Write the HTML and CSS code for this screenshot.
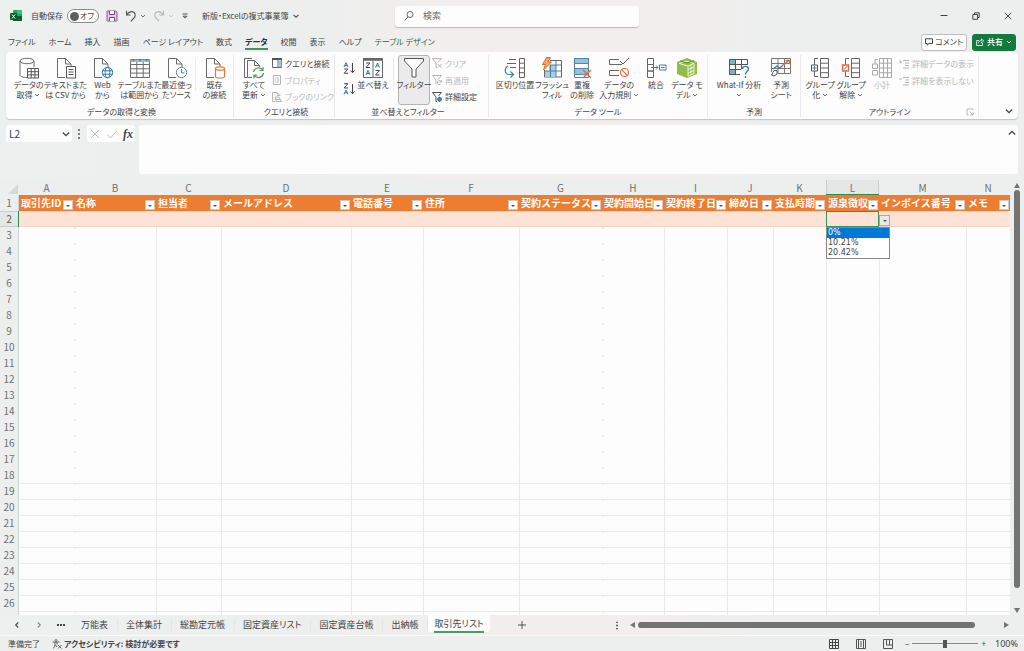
FILE: index.html
```html
<!DOCTYPE html>
<html lang="ja">
<head>
<meta charset="utf-8">
<title>新版・Excelの複式事業簿</title>
<link rel="stylesheet" href="styles.css">
</head>
<body>
<svg class="defs" width="0" height="0" aria-hidden="true">
  <symbol id="chev" viewBox="0 0 8 8"><path d="M1.500 2.800 4 5.300 6.500 2.800" fill="none" stroke="currentColor" stroke-width="1.100"/></symbol>
  <symbol id="page" viewBox="0 0 22 22"><path d="M10 20.500H2.500V1.500H10.500L16 7V10M10.500 1.500V7H16" fill="#fff" stroke="#6a6a6a"/></symbol>
</svg>

<header class="titlebar">
  <div class="title-left">
    <svg class="i12" viewBox="0 0 12 12"><rect x="3" y="0" width="9" height="11" rx="1" fill="#21a366"/><rect x="7" y="0" width="5" height="4" fill="#33c481"/><rect x="3" y="6" width="9" height="5" fill="#185c37"/><rect x="0" y="3" width="7" height="7" rx="1" fill="#0f5a31"/><path d="M2 4.500 5 8.500M5 4.500 2 8.500" stroke="#fff"/></svg>
    <label class="autosave" for="autosave">自動保存</label>
    <span class="toggle"><input type="checkbox" id="autosave"><span class="knob"></span><span>オフ</span></span>
    <button class="plain save" aria-label="保存"><svg class="i12" viewBox="0 0 12 12"><path d="M1 1H10L11 2V11H1Z" fill="#e9c9ec" stroke="#9a4fa3"/><path d="M3.500 1V4.500H8.500V1" fill="#fff" stroke="#6a5070"/><path d="M3.500 11V7.500H8.500V11" fill="#fff" stroke="#6a5070"/></svg></button>
    <button class="plain undo" aria-label="元に戻す"><svg class="i12" viewBox="0 0 12 12"><path d="M1.500 .8V5H5.700M1.700 4.800C4 1.600 7 .9 9 2.500 11 4.300 10.400 6.600 9 8L5.800 11.300" fill="none" stroke="#555" stroke-width="1.100"/></svg><svg class="i6"><use href="#chev"/></svg></button>
    <button class="plain redo" aria-label="やり直し"><svg class="i12" viewBox="0 0 12 12"><path d="M10.500 .8V5H6.300M10.300 4.800C8 1.600 5 .9 3 2.500 1 4.300 1.600 6.600 3 8L6.200 11.300" fill="none" stroke="#b5b8b8" stroke-width="1.100"/></svg><svg class="i6"><use href="#chev"/></svg></button>
    <button class="plain" aria-label="カスタマイズ"><svg class="i8" viewBox="0 0 8 8"><path d="M1.500 2H6.500M2 4.200 4 6.200 6 4.200Z" fill="none" stroke="#555"/></svg></button>
    <button class="plain doc">新版・Excelの複式事業簿 <svg class="i8"><use href="#chev"/></svg></button>
  </div>
  <label class="search"><svg class="i12" viewBox="0 0 12 12"><circle cx="7" cy="4.500" r="3" fill="none" stroke="#666"/><path d="M5 7 1.500 10.500" stroke="#666"/></svg><input type="search" placeholder="検索" aria-label="検索"></label>
  <div class="window">
    <button class="plain" aria-label="最小化"><svg class="i8" viewBox="0 0 8 8"><path d="M.5 3.500H7.500" stroke="#444"/></svg></button>
    <button class="plain" aria-label="元のサイズ"><svg class="i8" viewBox="0 0 8 8"><path d="M.8 2.500H5.500V7.300H.8ZM2.500 2.500V.8H7.200V5.500H5.500" fill="none" stroke="#444"/></svg></button>
    <button class="plain" aria-label="閉じる"><svg class="i8" viewBox="0 0 8 8"><path d="M.8.8 7.200 7.200M7.200.8.8 7.200" stroke="#444"/></svg></button>
  </div>
</header>

<nav class="tabs">
  <a href="#">ファイル</a><a href="#">ホーム</a><a href="#">挿入</a><a href="#">描画</a><a href="#">ページ レイアウト</a><a href="#">数式</a><a href="#" class="current" aria-current="page">データ</a><a href="#">校閲</a><a href="#">表示</a><a href="#">ヘルプ</a><a href="#" class="context">テーブル デザイン</a>
  <div class="tab-actions">
    <button class="comment"><svg class="i8" viewBox="0 0 8 8"><path d="M.5.8H7.500V5.500H4L2.200 7.200V5.500H.5Z" fill="none" stroke="#444"/></svg>コメント</button>
    <button class="share"><svg class="i8" viewBox="0 0 8 8"><path d="M3 2.500H.6V7.500H6.500V5M2.500 5.500C2.500 3.500 4 2.500 5.500 2.500V.8L7.700 3 5.500 5V3.700" fill="none" stroke="#fff" stroke-width=".8"/></svg>共有<svg class="i6"><use href="#chev"/></svg></button>
  </div>
</nav>

<section class="ribbon" aria-label="データ">
  <div class="group snug">
    <div class="tools">
      <button class="big w37"><svg class="i22" viewBox="0 0 22 22"><path d="M2 4V18C2 19.500 5 20.500 9 20.500M16 4V10" fill="none" stroke="#6a6a6a"/><ellipse cx="9" cy="4" rx="7" ry="2.700" fill="#fff" stroke="#6a6a6a"/><path d="M9.500 11.500H20.500V21H9.500ZM9.500 14.700H20.500M9.500 17.900H20.500M13.200 11.500V21M16.900 11.500V21" fill="#fff" stroke="#555"/></svg><span>データの<br>取得 <svg class="i6"><use href="#chev"/></svg></span></button>
      <button class="big w37"><svg class="i22" viewBox="0 0 22 22"><use href="#page"/><path d="M11.500 9.500H20.500V21H11.500ZM13.500 12.500H18.500M13.500 15H18.500M13.500 17.500H18.500" fill="#fff" stroke="#555"/></svg><span>テキストまた<br>は CSV から</span></button>
      <button class="big w37"><svg class="i22" viewBox="0 0 22 22"><use href="#page"/><circle cx="15.500" cy="15.500" r="5.200" fill="#fff" stroke="#2b7cab"/><ellipse cx="15.500" cy="15.500" rx="2.300" ry="5.200" fill="none" stroke="#2b7cab"/><path d="M10.500 13.800H20.500M10.500 17.200H20.500" stroke="#2b7cab"/></svg><span>Web<br>から</span></button>
      <button class="big w37"><svg class="i22" viewBox="0 0 22 22"><path d="M1.500 2.500H20.500V20.500H1.500ZM1.500 7.500H20.500M1.500 11.800H20.500M1.500 16.100H20.500M7.800 5V20.500M14.200 5V20.500" fill="#fff" stroke="#6a6a6a"/><path d="M1.500 2.500H20.500V5H1.500Z" fill="#9dbccb"/><path d="M3 2 4.500 4.500 6 2M9.500 2 11 4.500 12.500 2M16 2 17.500 4.500 19 2" fill="#2b7cab"/></svg><span>テーブルまた<br>は範囲から</span></button>
      <button class="big w37"><svg class="i22" viewBox="0 0 22 22"><use href="#page"/><circle cx="15.500" cy="15.500" r="5.200" fill="#fff" stroke="#4b87ab"/><path d="M15.500 12V15.800H18.500" fill="none" stroke="#4b87ab"/></svg><span>最近使っ<br>たソース</span></button>
      <i class="rule"></i>
      <button class="big w37"><svg class="i22" viewBox="0 0 22 22"><use href="#page"/><path d="M11.500 11.500V19.500C11.500 21.500 20.500 21.500 20.500 19.500V11.500" fill="#fff" stroke="#e07a3c" stroke-width="1.200"/><ellipse cx="16" cy="11.500" rx="4.500" ry="1.700" fill="#fff" stroke="#e07a3c" stroke-width="1.200"/></svg><span>既存<br>の接続</span></button>
    </div>
    <div class="caption">データの取得と変換</div>
  </div>

  <div class="group snug">
    <div class="tools">
      <button class="big w32"><svg class="i22" viewBox="0 0 22 22"><path d="M4.500 20.500H1.500V1.500H9" fill="none" stroke="#6a6a6a"/><path d="M9 20.500H4.500V3.500H11.500L16.500 8.500V10M11.500 3.500V8.500H16.500" fill="#fff" stroke="#6a6a6a"/><path d="M10.500 15A5 5 0 0 1 19.500 13M20.500 16A5 5 0 0 1 11.500 18.500M20 10V13.500H16.500M11 21.500V18H14.500" fill="none" stroke="#4f9a5d" stroke-width="1.200"/></svg><span>すべて<br>更新 <svg class="i6"><use href="#chev"/></svg></span></button>
      <div class="stack">
        <button class="small"><svg class="i10" viewBox="0 0 10 10"><path d="M.5.5H9.500V9.500H.5ZM6 2V9.500" fill="#fff" stroke="#666"/><path d="M0 1H10" stroke="#555" stroke-width="2"/><rect x="6.500" y="2.500" width="3" height="6.500" fill="#9cc4da"/></svg>クエリと接続</button>
        <button class="small" disabled><svg class="i10" viewBox="0 0 10 10"><path d="M1.500.5H8.500V9.500H1.500ZM3 3H4M5 3H7M3 5H4M5 5H7M3 7H4M5 7H7" fill="none" stroke="#999"/></svg>プロパティ</button>
        <button class="small" disabled><svg class="i10" viewBox="0 0 10 10"><path d="M3 9.500H.5V.5H5L8 3.500V4M5 .5V3.500H8M3.500 5H7L9.500 9.500H4ZM3.500 7.500H8" fill="none" stroke="#999"/></svg>ブックのリンク</button>
      </div>
    </div>
    <div class="caption">クエリと接続</div>
  </div>

  <div class="group roomy">
    <div class="tools">
      <div class="sorts">
        <button class="sort" aria-label="昇順"><svg class="i12" viewBox="0 0 12 12"><path d="M9.500 1V10.500M7.500 8.500 9.500 10.700 11.500 8.500" fill="none" stroke="#444"/><path d="M1 5 3 .7 5 5M1.800 3.500H4.200" fill="none" stroke="#2b7cab"/><path d="M1.200 7H4.800L1.200 11.300H5" fill="none" stroke="#444"/></svg></button>
        <button class="sort" aria-label="降順"><svg class="i12" viewBox="0 0 12 12"><path d="M9.500 1V10.500M7.500 8.500 9.500 10.700 11.500 8.500" fill="none" stroke="#444"/><path d="M1.200.7H4.800L1.200 5H5" fill="none" stroke="#444"/><path d="M1 11.300 3 7 5 11.300M1.800 9.800H4.200" fill="none" stroke="#2b7cab"/></svg></button>
      </div>
      <button class="big w32"><svg class="i22" viewBox="0 0 22 22"><path d="M1.500 1.500H20.500V20.500H1.500ZM11 4V20.500" fill="#fff" stroke="#666"/><path d="M1 2.500H21" stroke="#666" stroke-width="2.500"/><path d="M4 6H8L4 10.500H8M13.500 13.500H17.500L13.500 18H17.500" fill="none" stroke="#444"/><path d="M4 18 6 13.500 8 18M4.800 16.500H7.200M13.500 10.500 15.500 6 17.500 10.500M14.300 9H16.700" fill="none" stroke="#2b7cab"/></svg><span>並べ替え</span></button>
      <i class="rule"></i>
      <button class="big w32 pressed"><svg class="i22" viewBox="0 0 22 22"><path d="M1.500 1.500H20.500V4L13 12V20H9V12L1.500 4Z" fill="#fdfdfd" stroke="#555"/></svg><span>フィルター</span></button>
      <div class="stack">
        <button class="small" disabled><svg class="i10" viewBox="0 0 10 10"><path d="M.5.5H9.500L6 4.500M.5.5 4 5V9.500H5M6 6 9.500 9.500M9.500 6 6 9.500" fill="none" stroke="#999"/></svg>クリア</button>
        <button class="small" disabled><svg class="i10" viewBox="0 0 10 10"><path d="M.5.5H9.500L6 4.500M.5.5 4 5V9.500M9.500 5V7H7.500M9.300 7A2 2 0 1 0 8.500 9.300" fill="none" stroke="#999"/></svg>再適用</button>
        <button class="small"><svg class="i10" viewBox="0 0 10 10"><path d="M.5.5H9.500L6.500 4M.5.5 4 5V9.500H5" fill="none" stroke="#555"/><circle cx="7.500" cy="7.300" r="1.600" fill="none" stroke="#2b7cab" stroke-width="1.500"/><path d="M7.500 4.500V10M4.800 7.300H10" stroke="#2b7cab" stroke-width=".8"/></svg>詳細設定</button>
      </div>
    </div>
    <div class="caption">並べ替えとフィルター</div>
  </div>

  <div class="group">
    <div class="tools">
      <button class="big w44"><svg class="i22" viewBox="0 0 22 22"><path d="M5 2.500H12M3 6.500H12M6 10.500H12" stroke="#666"/><path d="M15.500 1.500H20.500V20.500H15.500ZM15.500 6.200H20.500M15.500 11H20.500M15.500 15.700H20.500" fill="#fff" stroke="#666"/><path d="M4 9C0 11 .5 17.500 5 17.500H9M6.500 14.500 9.500 17.500 6.500 20.500" fill="none" stroke="#3d7fa8" stroke-width="1.200"/></svg><span>区切り位置</span></button>
      <button class="big w30"><svg class="i22" viewBox="0 0 22 22"><path d="M9 3.500H20.500V20H3.500V13" fill="#fff" stroke="#666"/><path d="M8 8H15V20H4V14H8Z" fill="#a9cde2"/><path d="M9 8H20.500M4 14H20.500M9.500 8V20M15 3.500V20" stroke="#4b7f9c"/><path d="M5.500.5H9.500L7 5H10.500L2.500 13 4.500 7.500H1.500Z" fill="#f6a46c" stroke="#df6a2c"/></svg><span>フラッシュ<br>フィル</span></button>
      <button class="big w30"><svg class="i22" viewBox="0 0 22 22"><path d="M3.500 1.500H17.500V20.500H3.500Z" fill="#fff" stroke="#777"/><path d="M3.500 1.500H17.500V6.500H3.500ZM3.500 11.500H17.500V17.500H3.500Z" fill="#9cc0d4" stroke="#4b87ab"/><path d="M12 13 20 21M20 13 12 21" stroke="#df6a3c" stroke-width="1.300"/></svg><span>重複<br>の削除</span></button>
      <button class="big w44"><svg class="i22" viewBox="0 0 22 22"><path d="M11 2.500H1.500V7.500H14M11 13.500H1.500V18.500H11" fill="none" stroke="#666"/><path d="M12 4 15 7 21 1" fill="none" stroke="#555"/><circle cx="16.500" cy="15.500" r="4" fill="#fff" stroke="#df6a3c" stroke-width="1.200"/><path d="M13.700 12.700 19.300 18.300" stroke="#df6a3c" stroke-width="1.200"/></svg><span>データの<br>入力規則 <svg class="i6"><use href="#chev"/></svg></span></button>
      <button class="big w30"><svg class="i22" viewBox="0 0 22 22"><path d="M2.500 1.500H8.500V7.500H2.500ZM2.500 7.500H8.500V14H2.500ZM2.500 14H8.500V20.500H2.500Z" fill="#fff" stroke="#666"/><path d="M6 10.500H13M11 8.500 13 10.500 11 12.500M14.500 8H21V13H14.500ZM16 10.500H19.500" fill="none" stroke="#3d7fa8"/></svg><span>統合</span></button>
      <button class="big w32"><svg class="i22" viewBox="0 0 22 22"><path d="M1 5 11 1 21 5V17L11 21 1 17Z" fill="#8fbc4b"/><path d="M3 6.500 10 4 18 6.500V16.500L12 19V9L3 6.500M12 9 18 6.500M12 12.500 18 10M12 16 18 13.500M15 8V17.500" fill="none" stroke="#eff6dd"/><path d="M4 3.800 11 6 18 3.800" fill="none" stroke="#5d8f2a"/></svg><span>データ モ<br>デル <svg class="i6"><use href="#chev"/></svg></span></button>
    </div>
    <div class="caption">データ ツール</div>
  </div>

  <div class="group">
    <div class="tools">
      <button class="big w54"><svg class="i22" viewBox="0 0 22 22"><path d="M1.500 2.500H19.500V17.500H1.500Z" fill="#fff"/><path d="M1.500 2.500H7.500V7.500H1.500ZM1.500 12.500H7.500V17.500H1.500Z" fill="#7fb0cb"/><path d="M12 17.500H1.500V2.500H19.500V8M1.500 7.500H19.500M1.500 12.500H13M7.500 2.500V17.500M13.500 2.500V12" fill="none" stroke="#555"/><path d="M14.500 12C14.500 8.500 20.500 8.500 20.500 12 20.500 14.500 17.500 14.500 17.500 17.500M17.500 19V21" fill="none" stroke="#3d7fa8" stroke-width="1.400"/></svg><span>What-If 分析<br><svg class="i6"><use href="#chev"/></svg></span></button>
      <button class="big w30"><svg class="i22" viewBox="0 0 22 22"><path d="M1.500 1.500H20.500V16.500H8M1.500 1.500V15M1.500 6.500H20.500M1.500 11.500H20.500M8 1.500V16.500M14.500 1.500V16.500" fill="none" stroke="#777"/><path d="M3 12 7 9 10 11 13 8" fill="none" stroke="#3d7fa8" stroke-width="1.300"/><path d="M13 8 19 3.500M15.500 3.500H19.500V7" fill="none" stroke="#df6a3c" stroke-width="1.300"/><path d="M1.500 18 4 13.500H7V17L4 19Z" fill="#fff" stroke="#555"/></svg><span>予測<br>シート</span></button>
    </div>
    <div class="caption">予測</div>
  </div>

  <div class="group">
    <div class="tools">
      <button class="big w30"><svg class="i22" viewBox="0 0 22 22"><path d="M11.500 1.500H19.500V20.500H11.500ZM11.500 6.200H19.500M11.500 11H19.500M11.500 15.700H19.500M9 1.500H5.500V8M5.500 13V19.500H9" fill="#fff" stroke="#666"/><path d="M2.500 8H8.500V14H2.500Z" fill="#fff" stroke="#555"/><path d="M3.500 11H7.500M5.500 9V13" stroke="#3d7fa8"/></svg><span>グループ<br>化 <svg class="i6"><use href="#chev"/></svg></span></button>
      <button class="big w32"><svg class="i22" viewBox="0 0 22 22"><path d="M11.500 1.500H19.500V20.500H11.500ZM11.500 6.200H19.500M11.500 11H19.500M11.500 15.700H19.500M9 1.500H5.500V8M5.500 13V19.500H9" fill="#fff" stroke="#666"/><path d="M2.500 8H8.500V14H2.500Z" fill="#fff" stroke="#df6a3c" stroke-width="1.300"/><path d="M3.500 13 7.500 9" stroke="#df6a3c"/></svg><span>グループ<br>解除 <svg class="i6"><use href="#chev"/></svg></span></button>
      <button class="big w30" disabled><svg class="i22" viewBox="0 0 22 22"><path d="M8.500 1.500H20.500V20.500H8.500ZM8.500 6.200H20.500M8.500 11H20.500M8.500 15.700H20.500M12.500 1.500V20.500M16.500 1.500V20.500M1.500 7H6.500V11.500H1.500ZM1.500 13.500H6.500V18H1.500ZM4 7V2.500H7" fill="none" stroke="#888"/></svg><span>小計</span></button>
      <div class="stack">
        <button class="small" disabled><svg class="i10" viewBox="0 0 10 10"><path d="M0 3H3M1.500 1.500V4.500M4 1.500H10M6 4H10M6 6.500H10M4 9H10" fill="none" stroke="#999"/></svg>詳細データの表示</button>
        <button class="small" disabled><svg class="i10" viewBox="0 0 10 10"><path d="M0 3H3M4 1.500H10M6 4H10M6 6.500H10M4 9H10" fill="none" stroke="#999"/></svg>詳細を表示しない</button>
      </div>
    </div>
    <div class="caption">アウトライン<svg class="i8 launcher" viewBox="0 0 8 8"><path d="M7 2V1H1V7H2.500M3.500 3.500 7 7M7 4V7H4" fill="none" stroke="#aaa" stroke-width=".8"/></svg></div>
  </div>
  <button class="plain collapse" aria-label="リボンを折りたたむ"><svg class="i10"><use href="#chev"/></svg></button>
</section>

<section class="formula">
  <label class="name"><input type="text" value="L2" aria-label="名前ボックス"><svg class="i10"><use href="#chev"/></svg></label>
  <svg class="grip" viewBox="0 0 4 10"><path d="M1 1H3M1 5H3M1 9H3" stroke="#555" stroke-width="1.600"/></svg>
  <div class="entry">
    <button class="plain" aria-label="キャンセル" disabled><svg class="i10" viewBox="0 0 10 10"><path d="M1 1 9 9M9 1 1 9" stroke="#bbb"/></svg></button>
    <button class="plain" aria-label="入力" disabled><svg class="i10" viewBox="0 0 10 10"><path d="M0 5.500 3.500 9 10 1.500" fill="none" stroke="#bbb"/></svg></button>
    <button class="plain fx" aria-label="関数の挿入">fx</button>
  </div>
  <div class="bar"><textarea aria-label="数式バー"></textarea><svg class="i10 flip"><use href="#chev"/></svg></div>
</section>

<main class="sheet">
  <div class="viewport">
    <table class="grid">
      <colgroup><col class="c-row"><col class="c55"><col class="c82"><col class="c65"><col class="c130"><col class="c72"><col class="c96"><col class="c83"><col class="c62"><col class="c63"><col class="c46"><col class="c53"><col class="c53"><col class="c87"><col></colgroup>
      <thead>
        <tr class="letters"><th><svg class="i10" viewBox="0 0 10 10"><path d="M10 0V10H0Z" fill="#d3dade"/></svg></th><th>A</th><th>B</th><th>C</th><th>D</th><th>E</th><th>F</th><th>G</th><th>H</th><th>I</th><th>J</th><th>K</th><th class="active">L</th><th>M</th><th>N</th></tr>
      </thead>
      <tbody id="rows">
        <tr class="titles"><th>1</th></tr>
        <tr class="entryrow"><th>2</th></tr>
      </tbody>
    </table>
  </div>
  <div class="vscroll"><i class="up"></i><i class="thumb"></i><i class="down"></i></div>
</main>

<nav class="sheets">
  <button class="plain" aria-label="前のシート"><svg class="i8 left"><use href="#chev"/></svg></button>
  <button class="plain next" aria-label="次のシート"><svg class="i8 right"><use href="#chev"/></svg></button>
  <button class="plain" aria-label="その他のシート"><svg class="i8" viewBox="0 0 8 8"><path d="M0 4H2M3 4H5M6 4H8" stroke="#444" stroke-width="1.800"/></svg></button>
  <div class="sheet-tabs"><a href="#">万能表</a><a href="#">全体集計</a><a href="#">総勘定元帳</a><a href="#">固定資産リスト</a><a href="#">固定資産台帳</a><a href="#">出納帳</a><a href="#" class="current" aria-current="page"><span>取引先リスト</span></a></div>
  <button class="plain add" aria-label="新しいシート"><svg class="i8" viewBox="0 0 8 8"><path d="M0 4H8M4 0V8" stroke="#555"/></svg></button>
  <div class="hscroll"><svg class="grip" viewBox="0 0 4 10"><path d="M1 1.500H3M1 5H3M1 8.500H3" stroke="#555" stroke-width="1.400"/></svg><i class="prev"></i><i class="thumb"></i><i class="fwd"></i></div>
</nav>

<footer class="status">
  <span>準備完了</span>
  <button class="plain access"><svg class="i10" viewBox="0 0 10 10"><circle cx="4" cy="1.500" r="1" fill="none" stroke="#555" stroke-width=".8"/><path d="M.5 3H7.500M3 3V6L1.500 9.500M5 3V5.500M3.500 6 5 8M6 6 9.500 9.500M9.500 6 6 9.500" fill="none" stroke="#555" stroke-width=".9"/></svg>アクセシビリティ: 検討が必要です</button>
  <div class="views">
    <button class="plain" aria-label="標準"><svg class="i10" viewBox="0 0 10 10"><path d="M.5.5H9.500V9.500H.5ZM.5 3.500H9.500M.5 6.500H9.500M3.500.5V9.500M6.500.5V9.500" fill="none" stroke="#444"/></svg></button>
    <button class="plain" aria-label="ページ レイアウト"><svg class="i10" viewBox="0 0 10 10"><path d="M.5.5H9.500V9.500H.5ZM2.500.5V9.500M7.500.5V9.500M4 3H6M4 5H6M4 7H6" fill="none" stroke="#555"/></svg></button>
    <button class="plain" aria-label="改ページ プレビュー"><svg class="i10" viewBox="0 0 10 10"><path d="M.5.5H9.500V9.500H.5ZM3.500.5V6H9.500M6.500.5V6" fill="none" stroke="#555"/></svg></button>
  </div>
  <div class="zoom"><span>−</span><input type="range" min="0" max="100" value="50" aria-label="ズーム"><span>+</span><span class="pct">100%</span></div>
</footer>
<script src="sheet.js"></script>
</body>
</html>
```
FILE: styles.css
```css
:root {
  --ink: #444;
  --chrome: #edefee;
  --line: #e9e9e9;
  --green: #14793f;
  --orange: #ed7d31;
  --peach: #fce3d6;
  --scroll: #737373;
}
* { box-sizing: border-box; }
body {
  margin: 0;
  height: 100vh;
  display: flex;
  flex-direction: column;
  overflow: hidden;
  background: linear-gradient(90deg, #ecf0ef 0%, #edefee 32%, #f1eeed 42%, #f1eeed 66%, #edefee 74%, #edefee 100%);
  color: var(--ink);
  font: 9px/12px "Noto Sans CJK JP", sans-serif;
  font-feature-settings: "palt";
}
button, input, textarea, select { font: inherit; color: inherit; font-feature-settings: inherit; margin: 0; }
button { cursor: pointer; }
a { color: inherit; text-decoration: none; }
.defs { position: absolute; }
svg { flex: none; }
.i6 { width: 6px; height: 6px; }
.i8 { width: 8px; height: 8px; }
.i10 { width: 10px; height: 10px; }
.i12 { width: 12px; height: 12px; }
.i22 { width: 22px; height: 22px; }
.plain { display: flex; align-items: center; gap: 3px; padding: 0; border: 0; background: none; }

/* Title bar */
.titlebar { display: grid; grid-template-columns: 385fr 244px 373fr; height: 32px; align-items: center; padding: 0 12px 0 10px; font-size: 8px; }
.title-left { display: flex; align-items: center; gap: 7px; white-space: nowrap; }
.autosave { margin-left: 2px; }
.toggle { position: relative; display: flex; align-items: center; justify-content: space-between; width: 32px; height: 14px; margin-left: -3px; padding: 0 4px 0 2px; border: 1px solid #8b8b8b; border-radius: 7px; background: #fff; }
.toggle input { position: absolute; inset: 0; opacity: 0; }
.knob { width: 9px; height: 9px; border-radius: 50%; background: #5e5e5e; }
.redo { color: #b5b8b8; }
.doc { margin-left: 6px; }
.search { display: flex; align-items: center; gap: 8px; height: 21px; padding: 0 8px; border-radius: 3px; background: #fdfdfd; box-shadow: 0 1px 1px #bbb; font-size: 9px; }
.search input { flex: 1; min-width: 0; padding: 0; border: 0; outline: 0; background: none; }
.search input::placeholder { color: #666; }
.window { display: flex; justify-content: flex-end; gap: 24px; }

/* Ribbon tabs */
.tabs { display: flex; align-items: center; gap: 13px; height: 20px; padding: 0 8px; font-size: 8px; white-space: nowrap; }
.tabs .current { font-weight: 700; box-shadow: 0 2px 0 #4a8f5f; color: #333; }
.tabs .context { color: #2a6a46; }
.tab-actions { display: flex; gap: 5px; margin-left: auto; }
.comment, .share { display: flex; align-items: center; gap: 2px; height: 17px; padding: 0 3px; border: 1px solid #bdbdbd; border-radius: 3px; background: #fdfdfd; }
.share { gap: 3px; border-color: var(--green); background: var(--green); color: #fff; font-weight: 500; }

/* Ribbon */
.ribbon { display: flex; margin: 0 6px; border-radius: 4px; background: #fdfdfd; box-shadow: 0 1px 1px #c4c4c4; font-size: 8px; line-height: 11px; }
.group { display: flex; flex-direction: column; margin: 3px 0 2px; padding: 0 4px; border-right: 1px solid var(--line); }
.snug { padding-right: 0; }
.roomy { padding-right: 11px; }
.tools { display: flex; height: 50px; }
.caption { position: relative; padding-top: 1px; text-align: center; }
.launcher { position: absolute; right: 0; top: 3px; }
.big { display: flex; flex-direction: column; align-items: center; gap: 1px; padding: 2px 0 0; border: 1px solid transparent; border-width: 0 1px; border-radius: 3px; background: none; white-space: nowrap; }
.big span { display: block; margin: 0 -8px; text-align: center; line-height: 10px; }
.big:disabled, .small:disabled { color: #b8b8b8; }
.big:disabled svg, .small:disabled svg { opacity: 0.7; }
.pressed { border: 1px solid #b5b5b5; background: #ebebeb; padding-top: 1px; }
.w30 { width: 30px; }
.w32 { width: 32px; }
.w37 { width: 37px; }
.w44 { width: 44px; }
.w54 { width: 54px; }
.rule { width: 1px; margin: 4px 0 14px; background: var(--line); }
.roomy .rule { margin-left: 4px; margin-right: 4px; }
.stack { display: flex; flex-direction: column; padding-left: 2px; }
.small { display: flex; align-items: center; gap: 3px; height: 17px; padding: 0; border: 0; background: none; white-space: nowrap; }
.sorts { display: flex; flex-direction: column; width: 18px; padding: 3px 0; }
.sort { padding: 0 0 0 2px; border: 0; background: none; height: 21px; }
.collapse { align-self: flex-end; margin: 0 4px 3px auto; }

/* Formula bar */
.formula { display: flex; align-items: flex-start; margin: 6px; height: 49px; }
.name { display: flex; align-items: center; width: 66px; height: 17px; padding: 0 1px 0 3px; border-radius: 3px; background: #fdfdfd; font-size: 10px; }
.name input { width: 52px; padding: 0; border: 0; background: none; outline: 0; }
.formula .grip { width: 4px; height: 10px; margin: 4px 5px 0; }
.entry { display: flex; align-items: center; justify-content: space-between; width: 48px; height: 17px; margin-left: 1px; padding: 0 2px 0 3px; border-radius: 3px; background: #fdfdfd; }
.fx { font: italic 700 12px/12px "Liberation Serif", serif; }
.bar { flex: 1; display: flex; height: 49px; margin-left: 4px; padding: 3px 1px; border-radius: 3px; background: #fdfdfd; }
.bar textarea { flex: 1; padding: 0; border: 0; background: none; resize: none; outline: 0; }
.flip { transform: rotate(180deg); }

/* Sheet */
.sheet { flex: 1; display: flex; min-height: 0; }
.viewport { flex: 1; min-width: 0; overflow: hidden; background: #fdfdfd; }
.grid { width: 100%; table-layout: fixed; border-collapse: separate; border-spacing: 0; }
.grid th, .grid td { height: 16px; padding: 0; line-height: 14px; }
.grid td { position: relative; border-left: 1px solid var(--line); border-top: 1px solid transparent; }
.grid td:nth-child(2), .grid td:nth-child(3), .grid td:nth-child(9) { border-left-color: transparent; }
.grid td:nth-child(3), .grid td:nth-child(9) { background: linear-gradient(var(--line), var(--line)) 0 0 / 2px 2px no-repeat border-box; }
.grid .lined td { border-top-color: var(--line); }
.grid tbody th { background: var(--chrome); border-right: 1px solid #ccd3d6; font-weight: 400; font-size: 10px; color: #707070; }
.grid .letters th { height: 15px; background: var(--chrome); font-weight: 400; font-size: 10px; color: #707070; }
.grid .letters th:first-child { text-align: right; line-height: 0; vertical-align: bottom; padding: 0 1px 1px 0; }
.grid .letters .active { background: #e4e7e6; border-bottom: 1px solid #2e8b50; box-shadow: inset 1px 0 0 #ccc, inset -1px 0 0 #ccc; line-height: 13px; }
.c-row { width: 19px; }
.c55 { width: 55px; }
.c82 { width: 82px; }
.c65 { width: 65px; }
.c130 { width: 130px; }
.c72 { width: 72px; }
.c96 { width: 96px; }
.c83 { width: 83px; }
.c62 { width: 62px; }
.c63 { width: 63px; }
.c46 { width: 46px; }
.c53 { width: 53px; }
.c87 { width: 87px; }
.grid .titles td { border: 0; background: var(--orange); color: #fff; font-weight: 700; font-size: 10px; font-feature-settings: normal; }
.field { display: flex; align-items: flex-end; height: 16px; padding: 0 1px 1px 2px; }
.field span { flex: 1; min-width: 0; white-space: nowrap; line-height: 15px; }
.drop { position: relative; flex: none; width: 10px; height: 10px; padding: 0; border: 1px solid #c9c9c9; background: #fdfdfd; }
.drop::after { content: ""; display: block; width: 0; margin: 1px auto 0; border: 2px solid transparent; border-top-color: #555; border-bottom: 0; }
.grid .entryrow td { border: 0; background: var(--peach); box-shadow: inset 0 -1px 0 #f0d3c4; }
.grid .entryrow th { background: #e4e7e6; border-right: 1px solid #2e8b50; box-shadow: inset 0 1px 0 #ccc, inset 0 -1px 0 #ccc; font-weight: 500; }
.grid .entryrow .selected { box-shadow: inset 0 0 0 1px #3c9159; }
.entryrow .drop { position: absolute; left: 100%; bottom: 1px; z-index: 2; width: 11px; height: 11px; background: #e9e9e9; border-color: #aaa; }
.choices { position: absolute; left: 0; top: 100%; z-index: 2; width: 64px; height: 32px; padding: 0; border: 1px solid #888; border-radius: 0; background: #fff; overflow: hidden; outline: 0; font: 8px/10px "DejaVu Sans", sans-serif; }
.choices option { min-height: 10px; height: 10px; padding: 0 1px; line-height: 10px; }
.choices option:checked { background: #0078d7 linear-gradient(#0078d7, #0078d7); color: #fff; }
.vscroll { display: flex; flex-direction: column; align-items: center; width: 14px; padding: 3px 0 2px; gap: 2px; }
.vscroll i, .hscroll i { display: block; }
.up, .down { border: 3px solid transparent; }
.up { border-bottom: 5px solid var(--scroll); border-top: 0; }
.down { border-top: 5px solid var(--scroll); border-bottom: 0; margin-top: 18px; }
.vscroll .thumb { flex: 1; width: 6px; border-radius: 3px; background: var(--scroll); }

/* Sheet tabs */
.sheets { display: flex; align-items: center; height: 21px; padding: 0 15px 0 13px; gap: 14px; border-bottom: 1px solid #fafafa; }
.next { color: #888; }
.left { transform: rotate(90deg); }
.right { transform: rotate(-90deg); }
.sheet-tabs { display: flex; align-self: stretch; align-items: center; margin-left: -6px; white-space: nowrap; }
.sheet-tabs a { padding: 0 9px 0 8px; border-right: 1px solid #e4e6e5; }
.sheet-tabs .current { align-self: stretch; margin-bottom: 3px; padding: 1px 6px 0; border: 0; border-radius: 0 0 3px 3px; background: #fdfdfd; }
.sheet-tabs .current span { display: block; line-height: 15px; border-bottom: 2px solid #4c9a68; }
.add { margin-left: 14px; }
.hscroll { display: flex; align-items: center; width: 394px; margin-left: auto; }
.hscroll .grip { width: 4px; height: 9px; margin-right: 11px; }
.prev, .fwd { border: 3px solid transparent; }
.prev { border-right: 5px solid var(--scroll); border-left: 0; }
.fwd { border-left: 5px solid var(--scroll); border-right: 0; }
.hscroll .thumb { flex: 1; height: 6px; margin: 0 29px 0 3px; border-radius: 3px; background: var(--scroll); }

/* Status bar */
.status { display: flex; align-items: center; height: 15px; padding: 0 6px 0 8px; font-size: 8px; background: var(--chrome); }
.access { margin-left: 12px; gap: 2px; font-weight: 700; }
.views { display: flex; gap: 17px; margin-left: auto; }
.zoom { display: flex; align-items: center; gap: 3px; margin-left: 12px; font-family: "Noto Sans", sans-serif; }
.zoom input { width: 66px; height: 10px; background: linear-gradient(#888, #888) center / 100% 1px no-repeat; appearance: none; }
.zoom input::-webkit-slider-thumb { appearance: none; width: 4px; height: 8px; background: #555; }
.pct { margin-left: 6px; font-size: 9px; }
```
FILE: sheet.js
```js
const fields = ["取引先ID", "名称", "担当者", "メールアドレス", "電話番号", "住所", "契約ステータス",
  "契約開始日", "契約終了日", "締め日", "支払時期", "源泉徴収", "インボイス番号", "メモ"];
const selectedColumn = 11;
const lastNumberedRow = 26;
const rates = ["0%", "10.21%", "20.42%"];
const body = document.getElementById("rows");

for (const name of fields) {
  const cell = body.rows[0].insertCell();
  cell.innerHTML = `<div class="field"><span>${name}</span><button class="drop" aria-label="${name}のフィルター"></button></div>`;
}

fields.forEach((name, i) => {
  const cell = body.rows[1].insertCell();
  if (i === selectedColumn) {
    cell.className = "selected";
    cell.innerHTML = `<button class="drop" aria-label="一覧を開く"></button>
      <select class="choices" size="3" aria-label="${name}">${rates.map((r, n) => `<option${n ? "" : " selected"}>${r}</option>`).join("")}</select>`;
  }
});

for (let n = 3; n <= lastNumberedRow + 1; n++) {
  const row = body.insertRow();
  if (n > 18) row.className = "lined";
  row.innerHTML = `<th>${n <= lastNumberedRow ? n : ""}</th>` + "<td></td>".repeat(fields.length);
}
```
